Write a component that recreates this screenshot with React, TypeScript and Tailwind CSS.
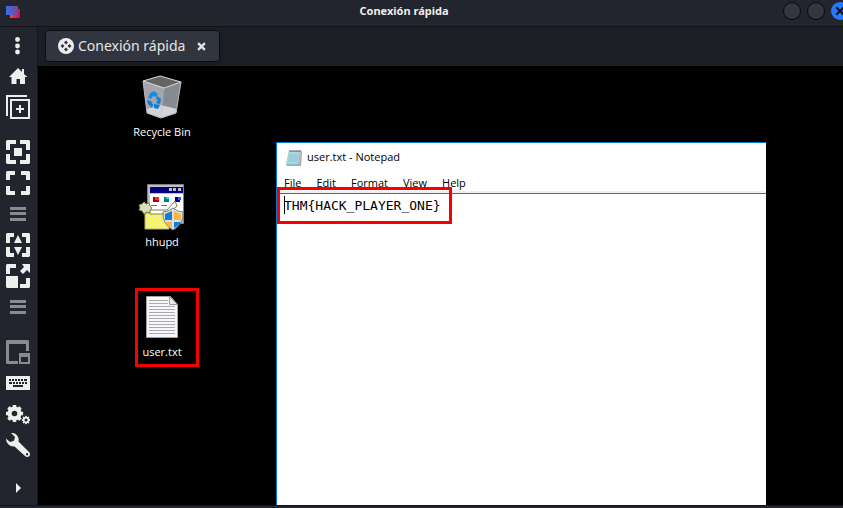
import type { ReactNode } from "react";

function Svg({ children, className = "size-6" }: { children: ReactNode; className?: string }) {
  return (
    <svg viewBox="0 0 24 24" className={`block ${className}`} fill="currentColor" aria-hidden="true">
      {children}
    </svg>
  );
}

function Tool({ label, children, muted = false }: { label: string; children: ReactNode; muted?: boolean }) {
  return (
    <button type="button" aria-label={label} className={muted ? "size-6 text-[#8a8b8e]" : "size-6 text-[#eeeeec]"}>
      <Svg>{children}</Svg>
    </button>
  );
}

const burger = <path d="M4 5h16v3H4zM4 10h16v3H4zM4 16h16v3H4z" />;

function gear(cx: number, cy: number, r: number, body: number, hole: number, tooth: number) {
  return (
    <g transform={`translate(${cx} ${cy})`}>
      {[0, 45, 90, 135].map((a) => (
        <rect key={a} x={-tooth / 2} y={-r} width={tooth} height={2 * r} rx={0.6} transform={`rotate(${a})`} />
      ))}
      <circle r={body} />
      <circle r={hole} fill="#23252e" />
    </g>
  );
}

function Sidebar() {
  return (
    <nav aria-label="Herramientas" className="flex w-[38px] shrink-0 flex-col items-start gap-[21px] border-r border-[#14161b] bg-[#23252e] pt-[6px] pl-[6px]">
      <div className="flex flex-col gap-[7px]">
        <Tool label="Menú">
          <circle cx="11.500" cy="6.500" r="2.400" />
          <circle cx="11.500" cy="13" r="2.400" />
          <circle cx="11.500" cy="19" r="2.400" />
        </Tool>
        <Tool label="Inicio">
          <path d="M12 4 3 13h2.500v7h5v-5h3.500v5h5v-7h2.500L18 10V5h-2v3z" />
        </Tool>
        <Tool label="Nueva conexión">
          <path d="M0 0h21v2H2v19H0z" />
          <path fillRule="evenodd" d="M4 4h20v20H4zM6 6v16h16V6z" />
          <path d="M13 10h2v3h3v2h-3v3h-2v-3h-3v-2h3z" />
        </Tool>
      </div>
      <div className="flex flex-col gap-[7px]">
        <Tool label="Ajustar ventana">
          <path d="M1 0h9v4H4v6H0V1zM14 0h9l1 1v9h-4V4h-6zM0 14h4v6h6v4H1l-1-1zM20 14h4v9l-1 1h-9v-4h6zM8 8h8v8H8z" />
        </Tool>
        <Tool label="Pantalla completa">
          <path d="M1 0h8v4H4v5H0V1zM15 0h8l1 1v8h-4V4h-5zM0 15h4v5h5v4H1l-1-1zM20 15h4v8l-1 1h-8v-4h5z" />
        </Tool>
        <Tool label="Opciones de pantalla" muted>{burger}</Tool>
        <Tool label="Resolución dinámica">
          <path d="M1 0h7v4H4v6H0V1zM16 0h7l1 1v9h-4V4h-4zM0 14h4v6h4v4H1l-1-1zM20 14h4v9l-1 1h-7v-4h4zM12 2l4 8H8zM8 14h8l-4 8z" />
        </Tool>
        <Tool label="Escalar">
          <path d="M1 0h9v4H4v6H0V1zM0 12h12v12H1l-1-1zM20 14h4v9l-1 1h-9v-4h6zM16 0h8v9l-3-3-4 4-3-3 4-4z" />
        </Tool>
        <Tool label="Opciones de escala" muted>{burger}</Tool>
      </div>
      <div className="flex flex-col gap-[7px]">
        <Tool label="Varios monitores" muted>
          <path d="M1 0h21l1 1v10h-3V4H3v17h9v3H1l-1-1V1z" />
          <path fillRule="evenodd" d="M13 13h11v11H13zM15 17v5h7v-5z" />
        </Tool>
        <Tool label="Capturar teclado">
          <path d="M0 5h24v14H0z" />
          <path d="M3 8h2v2H3zM6 8h2v2H6zM9 8h2v2H9zM12 8h2v2h-2zM15 8h2v2h-2zM18 8h3v2h-3zM3 11h3v2H3zM7 11h2v2H7zM10 11h2v2h-2zM13 11h2v2h-2zM16 11h2v2h-2zM19 11h2v2h-2zM7 14h10v2H7z" fill="#23252e" />
        </Tool>
        <Tool label="Preferencias">
          {gear(8.5, 11.5, 8.6, 7, 2.8, 3.6)}
          {gear(20, 18, 4.2, 3.1, 1.5, 1.8)}
        </Tool>
        <Tool label="Utilidades">
          <path fillRule="evenodd" d="M5 0Q10-.5 12 4q1 2.500.5 4.500L23 19q2 2 .2 4.200-2 1.600-4.200-.2L8.500 13.500q-3.500.5-6-2Q0 9 0 5.500L4 9l4-1.200 1-3.800zM21 20a1.200 1.200 0 1 0 .1 0z" />
        </Tool>
      </div>
      <button type="button" aria-label="Mostrar más" className="-mt-[2px] size-6 text-[#eeeeec]">
        <Svg><path d="m10 7 5 5-5 5z" /></Svg>
      </button>
    </nav>
  );
}

function RecycleBin() {
  return (
    <svg viewBox="0 0 48 48" className="size-12" aria-hidden="true">
      <path d="m26 14 17-6-5 31-15 5z" fill="#858c91" />
      <path d="m5 7 21 7-3 30-14-5z" fill="#a5a5ad" />
      <path d="m5 7 17-5 21 6-17 6z" fill="#646464" stroke="#dcdcdc" />
      <path d="m9 35 14-4 16 4-1 4-15 5-14-5z" fill="#d0d3d8" />
      <path d="m5 7 4 32 14 5 15-5 5-31" fill="none" stroke="#b8bcc0" />
      <path d="M26 14 23 44" stroke="#b9bbc2" strokeWidth=".7" />
      <path d="m12 19 4-2 4 3-2 3-3-1-2 3-3-1z" fill="#168ee0" />
      <path d="m19 22 4 3-1 5-4-1 2-3-2-1zM9 26l4 1 2 4-1 3-4-4zM16 30l6 1-2 4-4-1z" fill="#0c7fd6" />
    </svg>
  );
}

function Installer() {
  return (
    <svg viewBox="0 1 48 48" className="size-12" aria-hidden="true">
      <defs>
        <pattern id="dither" width="4" height="4" patternUnits="userSpaceOnUse">
          <path d="M0 0h4v4H0z" fill="#ffff20" />
          <path d="M0 0h2v2H0zM2 2h2v2H2z" fill="#e8e8c8" />
        </pattern>
      </defs>
      <path d="M9.500 1.500h36v39h-36z" fill="#c0c0c0" stroke="#808080" />
      <path d="M12 4h33v6H12z" fill="#000080" />
      <path d="M31 5h3v3h-3zM35 5h3v3h-3zM40 5h3v3h-3z" fill="#c0c0c0" />
      <path d="M12 11h33v19H12z" fill="#fff" />
      <path d="M15 14h6v5h-6z" fill="#b00000" /><path d="M17 14h4v3h-4z" fill="#f03030" />
      <path d="M26 14h5v5h-5z" fill="#008080" /><path d="M28 14h3v2h-3z" fill="#40d0c8" />
      <path d="M37 14h5v5h-5z" fill="#000090" /><path d="M40 14h3v3h-3z" fill="#3050ff" />
      <path d="M13 22.500h6M23 22.500h6M33 22.500h6" stroke="#707070" />
      <path d="M7 30h24v16H7z" fill="url(#dither)" stroke="#b8b070" />
      <path d="M11 27h18l8-9 2 5-9 8H12z" fill="#fff" stroke="#848040" />
      <path d="m6 19 2 2 3-1 1 3 2 2-2 2v3l-3-1-3 2-2-3-3-1 1-2-1-3 3-1z" fill="#dcdcbc" stroke="#808040" />
      <path d="M35 25q5 4 10 4 1 12-10 18-11-6-10-18 5 0 10-4z" fill="#d8dfe6" stroke="#75838f" />
      <path d="m34 28-7 3v6h7z" fill="#1680d0" /><path d="m36 28 7 3v6h-7z" fill="#ffb542" />
      <path d="M27 39h7v6q-5-2-7-6z" fill="#ffb542" /><path d="M36 39h7q-2 4-7 6z" fill="#1680d0" />
    </svg>
  );
}

function TextFile() {
  return (
    <svg viewBox="0 0 48 48" className="size-12" aria-hidden="true">
      <path d="M8.500 2.500h24l7 8v33h-31z" fill="#f7f7fa" stroke="#a0a0a0" />
      <path d="M11 6.500h19M11 9.500h19M11 12.500h26M11 15.500h26M11 18.500h26M11 21.500h26M11 24.500h26M11 27.500h26M11 30.500h26M11 33.500h26M11 36.500h26M11 39.500h26" stroke="#aaaab0" />
      <path d="M31.500 2.500v8h8z" fill="#e8e8ea" stroke="#999" />
    </svg>
  );
}

function DesktopIcon({ label, children }: { label: string; children: ReactNode }) {
  return (
    <button type="button" className="flex h-[110px] w-[76px] flex-col items-center pt-[8px]">
      {children}
      <span className="mt-[2px] font-['Open_Sans',sans-serif] text-[11px] leading-[16px] text-white">{label}</span>
    </button>
  );
}

function Notepad() {
  return (
    <section aria-label="user.txt - Notepad" className="absolute top-[76px] right-[77px] bottom-0 left-[238px] flex flex-col border-t border-l border-[#0078d7] bg-white font-['Open_Sans',sans-serif] text-[11px] text-black">
      <header className="flex h-[29px] shrink-0 items-center gap-[4px] pl-[8px]">
        <svg viewBox="0 0 18 18" className="size-[18px]" aria-hidden="true">
          <path d="M4 2h12l-2 14H1z" fill="#87bccb" />
          <path d="M4 2h11l-2 13H1z" fill="#a9d8e3" />
          <path d="m16 2 1 1-1 14H3l-2-1h13z" fill="#b9a98c" />
          <path d="M4 6h9M4 8h9M3 10h10M3 12h9" stroke="#82b9c8" strokeWidth=".6" />
          <path d="M5 1v2M7 1v2M9 1v2M11 1v2M13 1v2M15 1v2" stroke="#4d5961" />
        </svg>
        <h1>user.txt - Notepad</h1>
      </header>
      <div role="menubar" className="flex h-[22px] shrink-0 items-center gap-[15px] border-b border-[#5c6470] pl-[7px] shadow-[inset_0_-2px_0_#f0f0f0]">
        {["File", "Edit", "Format", "View", "Help"].map((m) => (
          <button key={m} type="button" role="menuitem" className="leading-[16px]">{m}</button>
        ))}
      </div>
      <textarea
        aria-label="Contenido"
        spellCheck={false}
        defaultValue="THM{HACK_PLAYER_ONE}"
        className="block w-full flex-1 resize-none px-[7px] pt-[4px] font-['DejaVu_Sans_Mono',monospace] text-[13px] leading-[16px] outline-none"
      />
      <span className="absolute top-[53px] left-[7px] h-[18px] w-px bg-black" />
      <span className="pointer-events-none absolute top-[44px] left-0 h-[37px] w-[175px] border-3 border-[#f80000]" />
    </section>
  );
}

export default function App() {
  return (
    <div className="flex h-screen flex-col overflow-hidden bg-[#23252e] font-['Noto_Sans',sans-serif]">
      <header className="relative flex h-[27px] shrink-0 items-center justify-between border-b border-[#121419] pl-[5px]">
        <svg viewBox="0 0 16 14" className="h-[14px] w-4 -translate-y-px" aria-hidden="true">
          <defs>
            <linearGradient id="blue"><stop stopColor="#326fe8" /><stop offset="1" stopColor="#854193" /></linearGradient>
            <linearGradient id="red"><stop stopColor="#ff4933" /><stop offset="1" stopColor="#c3104f" /></linearGradient>
          </defs>
          <path d="M5 4h10v9H5z" fill="url(#red)" />
          <path d="M1 1h12v9H1z" fill="url(#blue)" />
        </svg>
        <div className="absolute inset-x-0 top-[2px] -ml-[35px] text-center text-[11px] leading-[18px] font-bold text-[#eeeeec]">Conexión rápida</div>
        <div className="-mr-[6px] flex gap-[6px] pb-[4px]">
          <button type="button" aria-label="Minimizar" className="size-[18px] rounded-full border border-[#08090b] bg-[#343741]" />
          <button type="button" aria-label="Maximizar" className="size-[18px] rounded-full border border-[#08090b] bg-[#343741]" />
          <button type="button" aria-label="Cerrar" className="flex size-[18px] items-center justify-center rounded-full bg-[#2777ff] text-[#10131a]">
            <Svg className="size-[10px]"><path d="m3 3 18 18M21 3 3 21" stroke="currentColor" strokeWidth="5" /></Svg>
          </button>
        </div>
      </header>
      <div className="flex min-h-0 flex-1">
        <Sidebar />
        <main className="flex min-w-0 flex-1 flex-col">
          <div className="flex h-[39px] shrink-0 items-start bg-[#1b1e25] pt-[3px] pl-[7px]">
            <div className="flex h-[32px] items-center rounded-[4px] border border-[#0d0f13] bg-[#31353f] pr-[13px] pl-[12px] text-[#e4e5e6] shadow-sm">
              <svg viewBox="0 0 16 16" className="size-4" aria-hidden="true">
                <circle cx="8" cy="8" r="8" fill="#eeeeec" />
                <path d="m8 2.500 2 2-2 2-2-2zM8 9.500l2 2-2 2-2-2zM4.500 6l2 2-2 2-2-2zM11.500 6l2 2-2 2-2-2z" fill="#31353f" />
              </svg>
              <span className="ml-[4px] text-[14px] leading-[20px]">Conexión rápida</span>
              <button type="button" aria-label="Cerrar pestaña" className="ml-[12px]">
                <Svg className="size-[9px]"><path d="m3 3 18 18M21 3 3 21" stroke="currentColor" strokeWidth="6" /></Svg>
              </button>
            </div>
          </div>
          <div className="relative min-h-0 flex-1 overflow-hidden bg-black pl-[86px]">
            <DesktopIcon label="Recycle Bin"><RecycleBin /></DesktopIcon>
            <DesktopIcon label="hhupd"><Installer /></DesktopIcon>
            <DesktopIcon label="user.txt"><TextFile /></DesktopIcon>
            <span className="pointer-events-none absolute top-[222px] left-[97px] h-[79px] w-[64px] border-3 border-[#f80000]" />
            <Notepad />
          </div>
        </main>
      </div>
      <footer className="h-[3px] shrink-0 border-t border-[#121419]" />
    </div>
  );
}
